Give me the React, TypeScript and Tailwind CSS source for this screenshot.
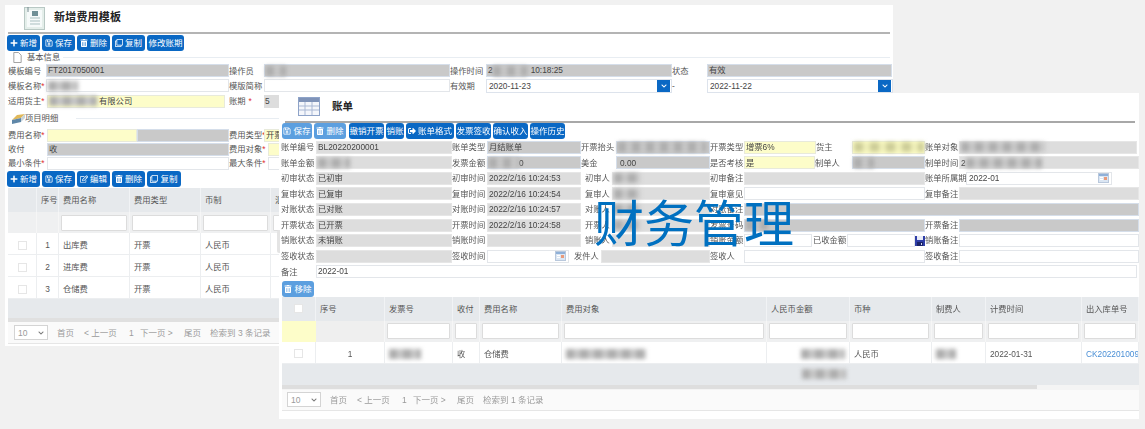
import React from "react";
import { FaPlus, FaRegSave, FaTrashAlt, FaRegClone, FaRegEdit, FaSignOutAlt, FaChevronDown } from "react-icons/fa";

const D = "bg-[#c9c9c9] border border-[#d5deea]";
const L = "bg-[#dddddd] border border-[#e6e6e6]";
const W = "bg-white border border-[#e3e6ea]";
const Y = "bg-[#fdfdc9] border border-[#e8eadb]";

function Lb({ w, children, star }: { w: string; children?: React.ReactNode; star?: boolean }) {
  return (
    <div className={`${w} shrink-0 whitespace-nowrap text-[#555] bg-white h-full flex items-center`}>
      {children}
      {star && <span className="text-[#e03030]">*</span>}
    </div>
  );
}

function In({ w, t, children, h = "h-[13px]" }: { w: string; t: string; children?: React.ReactNode; h?: string }) {
  return (
    <div className={`${w} ${t} ${h} shrink-0 flex items-center pl-[1px] text-[#444] whitespace-nowrap overflow-visible`}>
      {children}
    </div>
  );
}

function Bl({ w, c = "bg-[repeating-linear-gradient(90deg,#adadad_0_8px,#c8c8c8_8px_14px)]" }: { w: string; c?: string }) {
  return <span className={`inline-block h-[10px] blur-[2px] shrink-0 ${w} ${c}`} />;
}

function Btn({ icon, children, w, light }: { icon?: React.ReactNode; children: React.ReactNode; w: string; light?: boolean }) {
  return (
    <div
      className={`${w} ${light ? "bg-[#5c9fdf]" : "bg-[#0a68c4]"} h-[16px] rounded-[3px] shrink-0 flex items-center justify-center gap-[2px] text-white text-[8.5px] whitespace-nowrap`}
    >
      {icon}
      <span>{children}</span>
    </div>
  );
}

const ic = "text-[8px] shrink-0";

function Cb() {
  return <span className="block w-[9px] h-[9px] bg-white border border-[#e6e6e6]" />;
}

function Fi() {
  return <span className="block mx-[2px] h-[16px] bg-white border border-[#dcdcdc] rounded-[1px] w-full" />;
}

function Cal() {
  return (
    <svg width="11" height="10" viewBox="0 0 11 10" className="shrink-0">
      <rect x="0.5" y="0.5" width="10" height="9" fill="#dbe6f3" stroke="#b9c8dc" />
      <rect x="1" y="1" width="9" height="2" fill="#8fb0d8" />
      <rect x="6" y="4" width="3" height="3" fill="#e89a7a" />
      <rect x="2" y="4" width="3" height="1" fill="#fff" />
      <rect x="2" y="6" width="3" height="1" fill="#fff" />
    </svg>
  );
}

function Disk() {
  return (
    <svg width="10" height="10" viewBox="0 0 10 10" className="shrink-0">
      <rect width="10" height="10" fill="#2f3ea8" />
      <rect x="2" y="0" width="6" height="4" fill="#e8ecf8" />
      <rect x="2" y="6" width="6" height="4" fill="#1b2368" />
      <rect x="6" y="7" width="1" height="2" fill="#cfd6f0" />
    </svg>
  );
}

function Sel({ children }: { children: React.ReactNode }) {
  return (
    <div className="relative w-[186px] h-[14px] bg-white border border-[#dde3ec] flex items-center pl-[2px] text-[#444] shrink-0">
      {children}
      <span className="absolute right-[1px] top-[0px] w-[13px] h-[12px] bg-[#0a68c4] flex items-center justify-center text-white">
        <FaChevronDown className="text-[6px]" />
      </span>
    </div>
  );
}

function Pager({ total }: { total: number }) {
  return (
    <div className="flex items-center h-full text-[#9a9a9a] text-[8.5px]">
      <div className="w-[34px] h-[15px] bg-white border border-[#d4d4d4] flex items-center justify-between px-[3px] shrink-0">
        <span>10</span>
        <FaChevronDown className="text-[6px] text-[#777]" />
      </div>
      <span className="ml-[9px] w-[27px]">首页</span>
      <span className="w-[45px]">&lt; 上一页</span>
      <span className="w-[11px]">1</span>
      <span className="w-[44px]">下一页 &gt;</span>
      <span className="w-[26px]">尾页</span>
      <span className="whitespace-nowrap">检索到 {total} 条记录</span>
    </div>
  );
}

const hc = "h-[24px] flex items-center pl-[4px] bg-[#e6e9ec] border-r border-[#f1f3f5] text-[#555] whitespace-nowrap overflow-hidden";
const fc = "h-[21px] flex items-center bg-[#eff0f1] border-r border-[#f6f6f6]";
const dc = "h-[22px] flex items-center pl-[4px] pt-[3px] bg-white border-r border-b border-[#eceef0] text-[#555] whitespace-nowrap overflow-hidden";

function Row1({ children }: { children: React.ReactNode }) {
  return <div className="flex items-center h-[15.3px]">{children}</div>;
}

function Row2({ children }: { children: React.ReactNode }) {
  return <div className="flex items-center h-[15.55px]">{children}</div>;
}

function Template() {
  return (
    <div className="absolute left-[5px] top-[5px] w-[888px] h-[341px] bg-white">
      <div className="h-[27px] flex items-center pl-[19px] pb-[2px]">
        <svg width="21" height="24" viewBox="0 0 21 24" className="shrink-0">
          <rect x="0.5" y="1.5" width="20" height="22" fill="#e4eeea" stroke="#b8c8c4" />
          <rect x="3" y="4" width="15" height="17" fill="#f6fafa" />
          <rect x="8" y="5" width="6" height="5" fill="#6f8f96" />
          <path d="M6 12h10M6 15h10M6 18h10" stroke="#a9bfc0" />
          <path d="M4 1v5" stroke="#768a90" />
        </svg>
        <span className="ml-[9px] text-[11px] font-bold text-[#222] tracking-[0.2px]">新增费用模板</span>
      </div>
      <div className="mx-[3px] h-[2px] bg-[#b4b4b4]" />
      <div className="flex pl-[2px] gap-[2px] mt-[1px]">
        <Btn w="w-[33px]" icon={<FaPlus className={ic} />}>新增</Btn>
        <Btn w="w-[33px]" icon={<FaRegSave className={ic} />}>保存</Btn>
        <Btn w="w-[33px]" icon={<FaTrashAlt className={ic} />}>删除</Btn>
        <Btn w="w-[33px]" icon={<FaRegClone className={ic} />}>复制</Btn>
        <Btn w="w-[37px]">修改账期</Btn>
      </div>
      <div className="h-[12px] flex items-center pl-[8px] pt-[1px] text-[#555]">
        <svg width="9" height="11" viewBox="0 0 9 12" className="shrink-0">
          <path d="M.5.5h5l3 3v8h-8z" fill="#fff" stroke="#999" />
        </svg>
        <span className="ml-[5px] shrink-0">基本信息</span>
        <span className="ml-[3px] flex-1 h-[1px] bg-[#e8edf2] mr-[3px]" />
      </div>
      <div className="pl-[3px]">
        <Row1>
          <Lb w="w-[38px]">模板编号</Lb>
          <In w="w-[183px]" t={D}>FT2017050001</In>
          <Lb w="w-[35px]">操作员</Lb>
          <In w="w-[186px]" t={D}><Bl w="w-[20px]" /></In>
          <Lb w="w-[36px]">操作时间</Lb>
          <In w="w-[186px]" t={D}>2<Bl w="w-[34px]" /><span className="ml-[4px]">10:18:25</span></In>
          <Lb w="w-[35px]">状态</Lb>
          <In w="w-[185px]" t={D}>有效</In>
        </Row1>
        <Row1>
          <Lb w="w-[38px]" star>模板名称</Lb>
          <In w="w-[183px]" t={W}><Bl w="w-[30px]" /></In>
          <Lb w="w-[35px]">模版简称</Lb>
          <In w="w-[186px]" t={W} />
          <Lb w="w-[36px]">有效期</Lb>
          <Sel>2020-11-23</Sel>
          <Lb w="w-[35px]">-</Lb>
          <Sel>2022-11-22</Sel>
        </Row1>
        <Row1>
          <Lb w="w-[39px]" star>适用货主</Lb>
          <In w="w-[178px]" t={Y}><Bl w="w-[48px]" /><span className="ml-[2px]">有限公司</span></In>
          <span className="w-[4px] shrink-0" />
          <Lb w="w-[35px]">账期<span className="ml-[3px] text-[#e03030]">*</span></Lb>
          <In w="w-[15px]" t="bg-[#dddddd]">5</In>
        </Row1>
      </div>
      <div className="h-[19.5px] flex items-center pl-[7px] text-[#555]">
        <svg width="13" height="11" viewBox="0 0 13 11" className="shrink-0">
          <path d="M0 7l9-2 4-4-8 1z" fill="#e0b85a" />
          <path d="M0 7l9-2v4l-9 2z" fill="#5f87a8" />
          <path d="M9 5l4-4v4l-4 4z" fill="#c8d4dc" />
        </svg>
        <span className="shrink-0">项目明细</span>
        <span className="ml-[18px] flex-1 h-[1px] bg-[#e8edf2] mr-[3px]" />
      </div>
      <div className="pl-[3px]">
        <div className="flex items-center h-[14px]">
          <Lb w="w-[39px]" star>费用名称</Lb>
          <In w="w-[90px]" h="h-[12.5px]" t={Y} />
          <In w="w-[92px]" h="h-[12.5px]" t={D} />
          <Lb w="w-[35px]" star>费用类型</Lb>
          <In w="w-[186px]" h="h-[12.5px]" t={Y}>开票</In>
        </div>
        <div className="flex items-center h-[14px]">
          <Lb w="w-[39px]">收付</Lb>
          <In w="w-[182px]" h="h-[12.5px]" t={D}>收</In>
          <Lb w="w-[39px]" star>费用对象</Lb>
          <In w="w-[186px]" h="h-[12.5px]" t={Y} />
        </div>
        <div className="flex items-center h-[14px]">
          <Lb w="w-[39px]" star>最小条件</Lb>
          <In w="w-[182px]" h="h-[12.5px]" t={W} />
          <Lb w="w-[39px]" star>最大条件</Lb>
          <In w="w-[186px]" h="h-[12.5px]" t={W} />
        </div>
      </div>
      <div className="flex pl-[2px] gap-[2px] mt-[1px]">
        <Btn w="w-[33px]" icon={<FaPlus className={ic} />}>新增</Btn>
        <Btn w="w-[33px]" icon={<FaRegSave className={ic} />}>保存</Btn>
        <Btn w="w-[33px]" icon={<FaRegEdit className={ic} />}>编辑</Btn>
        <Btn w="w-[33px]" icon={<FaTrashAlt className={ic} />}>删除</Btn>
        <Btn w="w-[34px]" icon={<FaRegClone className={ic} />}>复制</Btn>
      </div>
      <div className="mx-[3px] mt-[1px]">
        <div className="grid grid-cols-[29px_22px_71px_71px_70px_100px]">
          <div className={hc} />
          <div className={hc}>序号</div>
          <div className={hc}>费用名称</div>
          <div className={hc}>费用类型</div>
          <div className={hc}>币制</div>
          <div className={hc}>汇率</div>
          <div className={fc} />
          <div className={fc} />
          <div className={fc}><Fi /></div>
          <div className={fc}><Fi /></div>
          <div className={fc}><Fi /></div>
          <div className={fc}><Fi /></div>
          {["出库费", "进库费", "仓储费"].map((n, i) => (
            <React.Fragment key={n}>
              <div className={`${dc} justify-center !pl-0`}><Cb /></div>
              <div className={`${dc} justify-center !pl-0`}>{i + 1}</div>
              <div className={dc}>{n}</div>
              <div className={dc}>开票</div>
              <div className={dc}>人民币</div>
              <div className={dc} />
            </React.Fragment>
          ))}
        </div>
        <div className="h-[19px] bg-[#e6e9ec]" />
        <div className="h-[4px] bg-[#e0e0e0]" />
        <div className="h-[22px] bg-[#fafafa] border-b border-[#e6e6e6] pl-[6px]">
          <Pager total={3} />
        </div>
      </div>
    </div>
  );
}

function Bill() {
  const gridCols = "grid grid-cols-[34px_69px_68px_27px_82px_205px_83px_82px_54px_96px_57px]";
  return (
    <div className="absolute left-[279px] top-[93px] w-[860px] h-[326px] bg-white">
      <div className="absolute -left-[2px] top-[137px] w-[3px] h-[23px] bg-[#e4e4e4] rounded-l-[2px]" />
      <div className="h-[28px] flex items-center pl-[19px] pb-[2px]">
        <svg width="22" height="19" viewBox="0 0 22 19" className="shrink-0">
          <rect x="0.5" y="0.5" width="21" height="18" fill="#f4f6fb" stroke="#8ea3c8" />
          <rect x="1" y="1" width="20" height="4" fill="#7f93b8" />
          <path d="M1 9h20M1 13h20M7 5v13M14 5v13" stroke="#a9b8d4" />
        </svg>
        <span className="ml-[12px] text-[10.5px] font-bold text-[#222]">账单</span>
      </div>
      <div className="ml-[6px] mr-[4px] h-[1.5px] bg-[#a8a8a8]" />
      <div className="flex pl-[3px] mt-[0.5px]">
        <Btn light w="w-[30px] mr-[2px]" icon={<FaRegSave className={ic} />}>保存</Btn>
        <Btn light w="w-[32px] mr-[3px]" icon={<FaTrashAlt className={ic} />}>删除</Btn>
        <Btn w="w-[35px] mr-[2px]">撤销开票</Btn>
        <Btn w="w-[18px] mr-[2px]">销账</Btn>
        <Btn w="w-[48px] mr-[2px]" icon={<FaSignOutAlt className={ic} />}>账单格式</Btn>
        <Btn w="w-[35px] mr-[2px]">发票签收</Btn>
        <Btn w="w-[35px] mr-[2px]">确认收入</Btn>
        <Btn w="w-[35px]">操作历史</Btn>
      </div>
      <div className="pl-[2px] mt-[0.5px]">
        <Row2>
          <Lb w="w-[35px]">账单编号</Lb>
          <In w="w-[136px]" t={L}>BL20220200001</In>
          <Lb w="w-[35px]">账单类型</Lb>
          <In w="w-[94px]" t={D}>月结账单</In>
          <Lb w="w-[35px]">开票抬头</Lb>
          <In w="w-[94px]" t={D}><Bl w="w-[88px]" /></In>
          <Lb w="w-[34px]">开票类型</Lb>
          <In w="w-[72px]" t={Y}>增票6%</In>
          <Lb w="w-[36px]">货主</Lb>
          <In w="w-[73px]" t={Y}><Bl w="w-[70px]" c="bg-[repeating-linear-gradient(90deg,#cdcd98_0_9px,#f0f0b8_9px_16px)]" /></In>
          <Lb w="w-[34px]">账单对象</Lb>
          <In w="w-[178px]" t={L}><Bl w="w-[84px]" /></In>
        </Row2>
        <Row2>
          <Lb w="w-[35px]">账单金额</Lb>
          <In w="w-[136px]" t={L}><Bl w="w-[32px]" /></In>
          <Lb w="w-[35px]">发票金额</Lb>
          <In w="w-[94px]" t={D}><Bl w="w-[30px]" />0</In>
          <Lb w="w-[35px]">美金</Lb>
          <In w="w-[94px]" t={D}><span className="ml-[2px]">0.00</span></In>
          <Lb w="w-[34px]">是否考核</Lb>
          <In w="w-[71px]" t={Y}>是</In>
          <Lb w="w-[37px]">制单人</Lb>
          <In w="w-[73px]" t={D}><Bl w="w-[20px]" /></In>
          <Lb w="w-[34px]">制单时间</Lb>
          <In w="w-[180px]" t={L}>2<Bl w="w-[76px]" /></In>
        </Row2>
        <Row2>
          <Lb w="w-[35px]">初审状态</Lb>
          <In w="w-[136px]" t={L}>已初审</In>
          <Lb w="w-[35px]">初审时间</Lb>
          <In w="w-[94px]" t={L}>2022/2/16 10:24:53</In>
          <Lb w="w-[31px]"><span className="ml-[4px]">初审人</span></Lb>
          <In w="w-[98px]" t={L}><Bl w="w-[26px]" /></In>
          <Lb w="w-[34px]">初审备注</Lb>
          <In w="w-[181px]" t={L} />
          <Lb w="w-[41px]">账单所属期</Lb>
          <div className="w-[146px] h-[13px] bg-white border border-[#e3e6ea] flex items-center justify-between px-[2px] text-[#444] shrink-0">
            2022-01<Cal />
          </div>
        </Row2>
        <Row2>
          <Lb w="w-[35px]">复审状态</Lb>
          <In w="w-[136px]" t={L}>已复审</In>
          <Lb w="w-[35px]">复审时间</Lb>
          <In w="w-[94px]" t={L}>2022/2/16 10:24:54</In>
          <Lb w="w-[31px]"><span className="ml-[4px]">复审人</span></Lb>
          <In w="w-[98px]" t={L}><Bl w="w-[26px]" /></In>
          <Lb w="w-[34px]">复审意见</Lb>
          <In w="w-[181px]" t={W} />
          <Lb w="w-[34px]">复审备注</Lb>
          <In w="w-[180px]" t={L} />
        </Row2>
        <Row2>
          <Lb w="w-[35px]">对账状态</Lb>
          <In w="w-[136px]" t={L}>已对账</In>
          <Lb w="w-[35px]">对账时间</Lb>
          <In w="w-[94px]" t={L}>2022/2/16 10:24:57</In>
          <Lb w="w-[31px]"><span className="ml-[4px]">对账人</span></Lb>
          <In w="w-[98px]" t={L}><Bl w="w-[26px]" /></In>
          <Lb w="w-[34px]">对账备注</Lb>
          <In w="w-[395px]" t={D} />
        </Row2>
        <Row2>
          <Lb w="w-[35px]">开票状态</Lb>
          <In w="w-[136px]" t={L}>已开票</In>
          <Lb w="w-[35px]">开票时间</Lb>
          <In w="w-[94px]" t={L}>2022/2/16 10:24:58</In>
          <Lb w="w-[31px]"><span className="ml-[4px]">开票人</span></Lb>
          <In w="w-[98px]" t={L}><Bl w="w-[26px]" /></In>
          <Lb w="w-[34px]">发票号码</Lb>
          <In w="w-[181px]" t={D}><Bl w="w-[22px]" /></In>
          <Lb w="w-[34px]">开票备注</Lb>
          <In w="w-[180px]" t={D} />
        </Row2>
        <Row2>
          <Lb w="w-[35px]">销账状态</Lb>
          <In w="w-[136px]" t={L}>未销账</In>
          <Lb w="w-[35px]">销账时间</Lb>
          <In w="w-[94px]" t={L} />
          <Lb w="w-[31px]"><span className="ml-[4px]">销账人</span></Lb>
          <In w="w-[98px]" t={L} />
          <Lb w="w-[34px]">销账金额</Lb>
          <In w="w-[68px]" t={W} />
          <Lb w="w-[35px]"><span className="ml-[1px]">已收金额</span></Lb>
          <In w="w-[68px]" t={W} />
          <span className="w-[10px] shrink-0 flex"><Disk /></span>
          <Lb w="w-[34px]">销账备注</Lb>
          <In w="w-[180px]" t={W} />
        </Row2>
        <Row2>
          <Lb w="w-[35px]">签收状态</Lb>
          <In w="w-[136px]" t={L} />
          <Lb w="w-[35px]">签收时间</Lb>
          <div className="w-[82px] h-[13px] bg-white border border-[#e3e6ea] flex items-center justify-end pr-[2px] shrink-0"><Cal /></div>
          <Lb w="w-[32px]"><span className="ml-[5px]">发件人</span></Lb>
          <In w="w-[109px]" t={L} />
          <Lb w="w-[34px]">签收人</Lb>
          <In w="w-[181px]" t={W} />
          <Lb w="w-[34px]">签收备注</Lb>
          <In w="w-[180px]" t={W} />
        </Row2>
        <Row2>
          <Lb w="w-[35px]">备注</Lb>
          <In w="w-[821px]" t={W}>2022-01</In>
        </Row2>
      </div>
      <div className="pl-[3px] mt-[1.5px]">
        <Btn light w="w-[32px]" icon={<FaTrashAlt className={ic} />}>移除</Btn>
      </div>
      <div className="ml-[3px]">
        <div className={gridCols}>
          <div className={`${hc} justify-center !pl-0`}><Cb /></div>
          {["序号", "发票号", "收付", "费用名称", "费用对象", "人民币金额", "币种", "制费人", "计费时间", "出入库单号"].map((h) => (
            <div key={h} className={hc}>{h}</div>
          ))}
          <div className="h-[21px] bg-[#fdfdc9]" />
          <div className="h-[21px] bg-[#efefef] border-r border-[#f6f6f6]" />
          {[0, 1, 2, 3, 4, 5, 6, 7, 8].map((k) => (
            <div key={k} className={fc}><Fi /></div>
          ))}
          <div className={`${dc} justify-center !pl-0`}><Cb /></div>
          <div className={`${dc} justify-center !pl-0`}>1</div>
          <div className={dc}><Bl w="w-[32px]" /></div>
          <div className={dc}>收</div>
          <div className={dc}>仓储费</div>
          <div className={dc}><Bl w="w-[80px]" /></div>
          <div className={`${dc} justify-end pr-[4px]`}><Bl w="w-[44px]" /></div>
          <div className={dc}>人民币</div>
          <div className={dc}><Bl w="w-[20px]" /></div>
          <div className={dc}>2022-01-31</div>
          <div className={`${dc} !text-[#4a8fd6]`}>CK2022010099</div>
        </div>
        <div className="h-[21px] bg-[#e6e9ec] flex">
          <span className="ml-[520px] mt-[5px] flex"><Bl w="w-[44px]" /></span>
        </div>
        <div className="h-[5px] bg-[#f4f4f4]"><div className="h-[4px] w-[755px] bg-[#dedede]" /></div>
        <div className="h-[21px] bg-[#fafafa] border-b border-[#e6e6e6] pl-[5px]">
          <Pager total={1} />
        </div>
      </div>
    </div>
  );
}

export default function App() {
  return (
    <div className="relative w-[1145px] h-[429px] overflow-hidden bg-[#f1f1f1] text-[8.3px] leading-none font-['Liberation_Sans','Noto_Sans_CJK_SC',sans-serif]">
      <div className="blur-[0.3px] absolute inset-0">
        <Template />
        <Bill />
      </div>
      <div className="absolute left-[594px] top-[188px] text-[50px] leading-[1.3] text-[#0070c0] whitespace-nowrap font-['Noto_Sans_CJK_SC',sans-serif]">
        财务管理
      </div>
    </div>
  );
}
